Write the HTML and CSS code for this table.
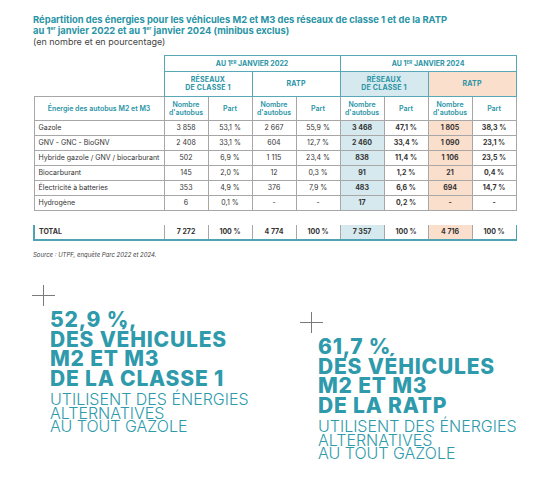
FILE: index.html
```html
<!DOCTYPE html>
<html lang="fr">

<head>
    <meta charset="UTF-8">
    <meta name="viewport" content="width=device-width, initial-scale=1.0">
    <title>Répartition des énergies</title>
    <link rel="stylesheet" href="styles.css">
</head>

<body>
    <div class="page">
        <div class="heading">
            <h1>Répartition des énergies pour les véhicules M2 et M3 des réseaux de classe 1 et de la RATP<br>
                au 1<sup>er</sup> janvier 2022 et au 1<sup>er</sup> janvier 2024 (minibus exclus)</h1>
            <p class="unit">(en nombre et en pourcentage)</p>
        </div>

        <table class="energy">
            <colgroup>
                <col class="col-label">
                <col><col><col><col><col><col><col><col>
            </colgroup>
            <thead>
                <tr class="year-row">
                    <th class="blank"></th>
                    <th colspan="4">AU 1<sup>ER</sup> JANVIER 2022</th>
                    <th colspan="4">AU 1<sup>ER</sup> JANVIER 2024</th>
                </tr>
                <tr class="group-row">
                    <th class="blank"></th>
                    <th colspan="2">RÉSEAUX<br>DE CLASSE 1</th>
                    <th colspan="2">RATP</th>
                    <th colspan="2" class="blue">RÉSEAUX<br>DE CLASSE 1</th>
                    <th colspan="2" class="peach">RATP</th>
                </tr>
                <tr class="label-row">
                    <th class="energy-label">Énergie des autobus M2 et M3</th>
                    <th>Nombre<br>d'autobus</th>
                    <th>Part</th>
                    <th>Nombre<br>d'autobus</th>
                    <th>Part</th>
                    <th>Nombre<br>d'autobus</th>
                    <th>Part</th>
                    <th>Nombre<br>d'autobus</th>
                    <th>Part</th>
                </tr>
            </thead>
            <tbody>
                <tr>
                    <td>Gazole</td>
                    <td>3 858</td><td>53,1 %</td><td>2 667</td><td>55,9 %</td>
                    <td class="blue strong">3 468</td><td class="strong">47,1 %</td><td class="peach strong">1 805</td><td class="strong">38,3 %</td>
                </tr>
                <tr>
                    <td>GNV - GNC - BioGNV</td>
                    <td>2 408</td><td>33,1 %</td><td>604</td><td>12,7 %</td>
                    <td class="blue strong">2 460</td><td class="strong">33,4 %</td><td class="peach strong">1 090</td><td class="strong">23,1 %</td>
                </tr>
                <tr>
                    <td>Hybride gazole / GNV / biocarburant</td>
                    <td>502</td><td>6,9 %</td><td>1 115</td><td>23,4 %</td>
                    <td class="blue strong">838</td><td class="strong">11,4 %</td><td class="peach strong">1 106</td><td class="strong">23,5 %</td>
                </tr>
                <tr>
                    <td>Biocarburant</td>
                    <td>145</td><td>2,0 %</td><td>12</td><td>0,3 %</td>
                    <td class="blue strong">91</td><td class="strong">1,2 %</td><td class="peach strong">21</td><td class="strong">0,4 %</td>
                </tr>
                <tr>
                    <td>Électricité à batteries</td>
                    <td>353</td><td>4,9 %</td><td>376</td><td>7,9 %</td>
                    <td class="blue strong">483</td><td class="strong">6,6 %</td><td class="peach strong">694</td><td class="strong">14,7 %</td>
                </tr>
                <tr>
                    <td>Hydrogène</td>
                    <td>6</td><td>0,1 %</td><td>-</td><td>-</td>
                    <td class="blue strong">17</td><td class="strong">0,2 %</td><td class="peach strong">-</td><td class="strong">-</td>
                </tr>
                <tr class="spacer">
                    <td colspan="9"></td>
                </tr>
                <tr class="total-row">
                    <td>TOTAL</td>
                    <td>7 272</td><td>100 %</td><td>4 774</td><td>100 %</td>
                    <td class="blue">7 357</td><td>100 %</td><td class="peach">4 716</td><td>100 %</td>
                </tr>
            </tbody>
        </table>

        <p class="source">Source : UTPF, enquête Parc 2022 et 2024.</p>

        <div class="stats">
            <div class="stat">
                <span class="cross"></span>
                <p class="stat-text">
                    <strong>52,9 %,<br>DES VÉHICULES<br>M2 ET M3<br>DE LA CLASSE 1</strong><br>
                    UTILISENT DES ÉNERGIES<br>ALTERNATIVES<br>AU TOUT GAZOLE
                </p>
            </div>
            <div class="stat stat-low">
                <span class="cross"></span>
                <p class="stat-text">
                    <strong>61,7 %<br>DES VÉHICULES<br>M2 ET M3<br>DE LA RATP</strong><br>
                    UTILISENT DES ÉNERGIES<br>ALTERNATIVES<br>AU TOUT GAZOLE
                </p>
            </div>
        </div>
    </div>
</body>

</html>
```

FILE: styles.css
```css
body {
    margin: 0;
    padding: 0;
    background-color: #ffffff;
    font-family: Inter, "Liberation Sans", sans-serif;
    color: #333333;
}

.page {
    padding: 14px 0 0 33px;
}

/* title block */
h1 {
    margin: 0;
    font-size: 9.4px;
    line-height: 11px;
    font-weight: 700;
    color: #2a94a5;
}

h1 sup {
    font-size: 5px;
    vertical-align: 4px;
    line-height: 0;
}

.unit {
    margin: 0;
    font-size: 9px;
    line-height: 11px;
    color: #444444;
}

/* table */
.energy {
    margin-top: 8px;
    border-collapse: collapse;
    table-layout: fixed;
    width: 482px;
    font-size: 7px;
    color: #333333;
}

.energy col {
    width: 44px;
}

.energy .col-label {
    width: 130px;
}

.energy th,
.energy td {
    border: 1px solid #a7a7a7;
    padding: 0 4px;
    text-align: center;
    line-height: 8px;
}

.energy th {
    color: #2a94a5;
    font-weight: 600;
}

.energy sup {
    font-size: 4.5px;
    vertical-align: 2.5px;
    line-height: 0;
}

.energy .blank {
    border: none;
}

.year-row th {
    height: 15px;
    border-color: #57a9b7;
    font-weight: 700;
}

.group-row th {
    height: 24px;
    border-color: #57a9b7;
    font-weight: 700;
    letter-spacing: 0.2px;
}

.label-row th {
    height: 23px;
}

.energy td {
    height: 14px;
}

.energy td:first-child {
    text-align: left;
}

.energy .blue {
    background-color: #d5e9ee;
}

.energy .peach {
    background-color: #fbdfcd;
}

.energy .strong {
    font-weight: 700;
}

.energy .spacer td {
    border: none;
    height: 14px;
}

.total-row td {
    border-top: none;
    border-bottom: 2px solid #4ea3b2;
    font-weight: 700;
}

.total-row td:first-child {
    border-left: 2px solid #4ea3b2;
}

.total-row td:last-child {
    border-right: 1px solid #4ea3b2;
}

.source {
    margin: 10px 0 0;
    font-size: 6px;
    font-style: italic;
    color: #444444;
}

/* key figures */
.stats {
    display: grid;
    grid-template-columns: 268px 1fr;
    margin-top: 27px;
    margin-left: -1px;
}

.stat-low {
    padding-top: 27px;
}

.cross {
    display: block;
    position: relative;
    width: 23px;
    height: 21px;
}

.cross::before,
.cross::after {
    content: "";
    position: absolute;
    background-color: #7a7a7a;
}

.cross::before {
    left: 0;
    top: 10px;
    width: 23px;
    height: 1px;
}

.cross::after {
    left: 11px;
    top: 0;
    width: 1px;
    height: 21px;
}

.stat-text {
    margin: 4px 0 0 18px;
    font-size: 16px;
    line-height: 13.5px;
    font-weight: 300;
    white-space: nowrap;
    color: #2e9aab;
}

.stat-text strong {
    display: inline-block;
    font-size: 21px;
    line-height: 19.5px;
    font-weight: 800;
    letter-spacing: 0.8px;
    padding-bottom: 5px;
}
```
